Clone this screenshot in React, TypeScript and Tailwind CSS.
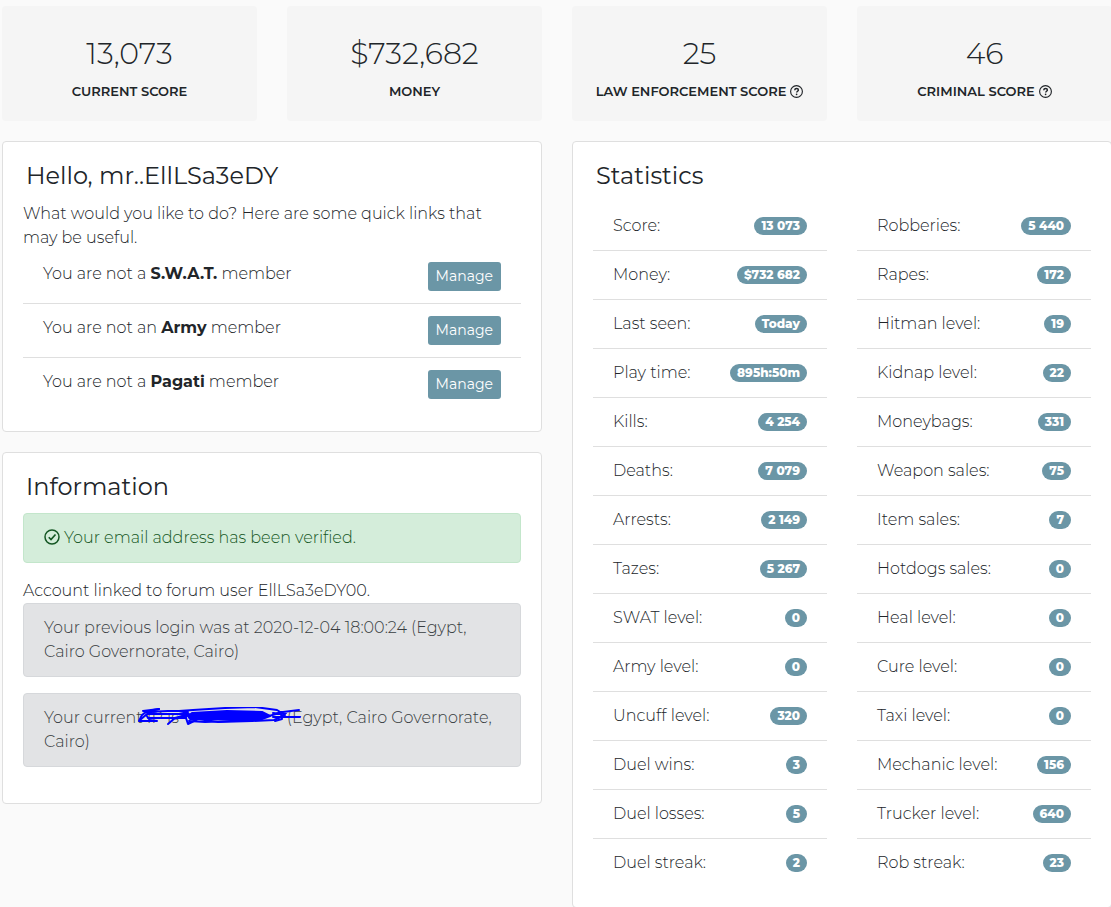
import type { ReactNode } from 'react';

type Stat = { label: string; value: string };

const leftStats: Stat[] = [
  { label: 'Score', value: '13 073' },
  { label: 'Money', value: '$732 682' },
  { label: 'Last seen', value: 'Today' },
  { label: 'Play time', value: '895h:50m' },
  { label: 'Kills', value: '4 254' },
  { label: 'Deaths', value: '7 079' },
  { label: 'Arrests', value: '2 149' },
  { label: 'Tazes', value: '5 267' },
  { label: 'SWAT level', value: '0' },
  { label: 'Army level', value: '0' },
  { label: 'Uncuff level', value: '320' },
  { label: 'Duel wins', value: '3' },
  { label: 'Duel losses', value: '5' },
  { label: 'Duel streak', value: '2' },
];

const rightStats: Stat[] = [
  { label: 'Robberies', value: '5 440' },
  { label: 'Rapes', value: '172' },
  { label: 'Hitman level', value: '19' },
  { label: 'Kidnap level', value: '22' },
  { label: 'Moneybags', value: '331' },
  { label: 'Weapon sales', value: '75' },
  { label: 'Item sales', value: '7' },
  { label: 'Hotdogs sales', value: '0' },
  { label: 'Heal level', value: '0' },
  { label: 'Cure level', value: '0' },
  { label: 'Taxi level', value: '0' },
  { label: 'Mechanic level', value: '156' },
  { label: 'Trucker level', value: '640' },
  { label: 'Rob streak', value: '23' },
];

const groups = [
  { article: 'a', name: 'S.W.A.T.' },
  { article: 'an', name: 'Army' },
  { article: 'a', name: 'Pagati' },
];

const HelpIcon = () => (
  <svg viewBox="0 0 26 26" className="ml-1 inline-block size-[13px] align-[-2px]" fill="none" stroke="currentColor" aria-hidden="true">
    <circle cx="13" cy="13" r="11.8" strokeWidth="2.3" />
    <path d="M9.4 10.6c.2-2.4 1.7-3.6 3.7-3.6s3.7 1.1 3.7 3c0 2.5-3.5 2.6-3.5 5.2" strokeWidth="2.9" />
    <circle cx="13.2" cy="18.6" r="1.7" fill="currentColor" stroke="none" />
  </svg>
);

const CheckIcon = () => (
  <svg viewBox="0 0 32 32" className="mr-1 inline-block size-4 align-[-2px]" fill="none" stroke="currentColor" aria-hidden="true">
    <circle cx="16" cy="16" r="14" strokeWidth="3" />
    <path d="M9.5 16.5l4.5 4.5 9-10" strokeWidth="3.4" />
  </svg>
);

// pen marks that hide the IP address
const Scribble = () => (
  <svg viewBox="0 0 170 20" className="absolute -top-4 -left-11 h-5 w-[170px]" fill="none" stroke="#0000ff" strokeWidth="2" strokeLinecap="round" strokeLinejoin="round" aria-hidden="true">
    <path d="M24 2C16 3 10 5 7 8L4 14h18l-8 -1" />
    <path d="M24 2L8 4l14 3M5 13l7-6h40M11 5l22-1h20M12 9l1 2h38" />
    <path d="M33 17l7-6 14-4M38 12l14-3" />
    <path d="M53 6l-3 2 3 9 10-5 20 3 34-1 22-1 11-5-8-5-22-3-30 1-32 2-14 1z" />
    <path d="M57 6l35-2 35 1 8 4-8 3-72 0-2-3z" fill="#0000ff" strokeWidth="2" />
    <path d="M54 14l16 1 52-2M138 6l8 1 1 5-7 2M134 9l14-4 16-2M138 10h27M144 5l7 1-8 5" />
  </svg>
);

const ScoreCard = ({ value, label, help = false }: { value: string; label: string; help?: boolean }) => (
  <div className="rounded bg-[#f5f5f5] pt-7 pb-5 text-center">
    <div className="text-3xl leading-10 font-light">{value}</div>
    <div className="mt-[7px] text-[13px] leading-5 font-semibold whitespace-nowrap uppercase">
      {label}
      {help && <HelpIcon />}
    </div>
  </div>
);

const Card = ({ title, children }: { title: string; children: ReactNode }) => (
  <section className="rounded border border-[#dfdfdf] bg-white p-5">
    <h2 className="mb-3 pl-[3px] text-2xl leading-7 font-normal">{title}</h2>
    {children}
  </section>
);

const StatList = ({ stats }: { stats: Stat[] }) => (
  <ul className="divide-y divide-[#dfdfdf]">
    {stats.map((stat) => (
      <li key={stat.label} className="flex items-center justify-between px-5 py-3">
        <span>{stat.label}:</span>
        <span className="rounded-full bg-[#6b96a6] px-[7px] text-xs leading-[18px] font-extrabold text-white">{stat.value}</span>
      </li>
    ))}
  </ul>
);

export default function App() {
  return (
    <main className="min-h-screen overflow-x-clip bg-[#fafafa] pt-1.5 pl-0.5 font-['Montserrat','Inter',sans-serif] text-base leading-6 font-light text-[#212529]">
      <div className="-mr-px grid grid-cols-4 gap-[30px]">
        <ScoreCard value="13,073" label="Current score" />
        <ScoreCard value="$732,682" label="Money" />
        <ScoreCard value="25" label="Law enforcement score" help />
        <ScoreCard value="46" label="Criminal score" help />
      </div>

      <div className="mt-5 -mr-px grid grid-cols-2 items-start gap-[30px]">
        <div className="flex flex-col gap-5">
          <Card title="Hello, mr..EllLSa3eDY">
            <p className="pr-4">What would you like to do? Here are some quick links that may be useful.</p>
            <ul className="divide-y divide-[#dfdfdf]">
              {groups.map((group) => (
                <li key={group.name} className="flex items-start justify-between px-5 py-3">
                  <span>
                    You are not {group.article} <b className="font-bold">{group.name}</b> member
                  </span>
                  <button type="button" className="rounded-[3px] bg-[#6b96a6] px-2 py-1 text-sm leading-[21px] font-normal text-white">
                    Manage
                  </button>
                </li>
              ))}
            </ul>
          </Card>

          <Card title="Information">
            <div className="mb-4 rounded border border-[#c3e6cb] bg-[#d4edda] px-5 py-3 text-[#155724]">
              <CheckIcon />
              Your email address has been verified.
            </div>
            <p>Account linked to forum user EllLSa3eDY00.</p>
            <div className="mb-4 rounded border border-[#d6d8db] bg-[#e2e3e5] px-5 py-3 text-[#383d41]">
              Your previous login was at 2020-12-04 18:00:24 (Egypt, Cairo Governorate, Cairo)
            </div>
            <div className="mb-4 rounded border border-[#d6d8db] bg-[#e2e3e5] px-5 py-3 text-[#383d41]">
              Your current IP is
              <span className="relative inline-block w-[108px]">
                <Scribble />
              </span>
              (Egypt, Cairo Governorate, Cairo)
            </div>
          </Card>
        </div>

        <Card title="Statistics">
          <div className="grid grid-cols-2 gap-[30px]">
            <StatList stats={leftStats} />
            <StatList stats={rightStats} />
          </div>
        </Card>
      </div>
    </main>
  );
}
